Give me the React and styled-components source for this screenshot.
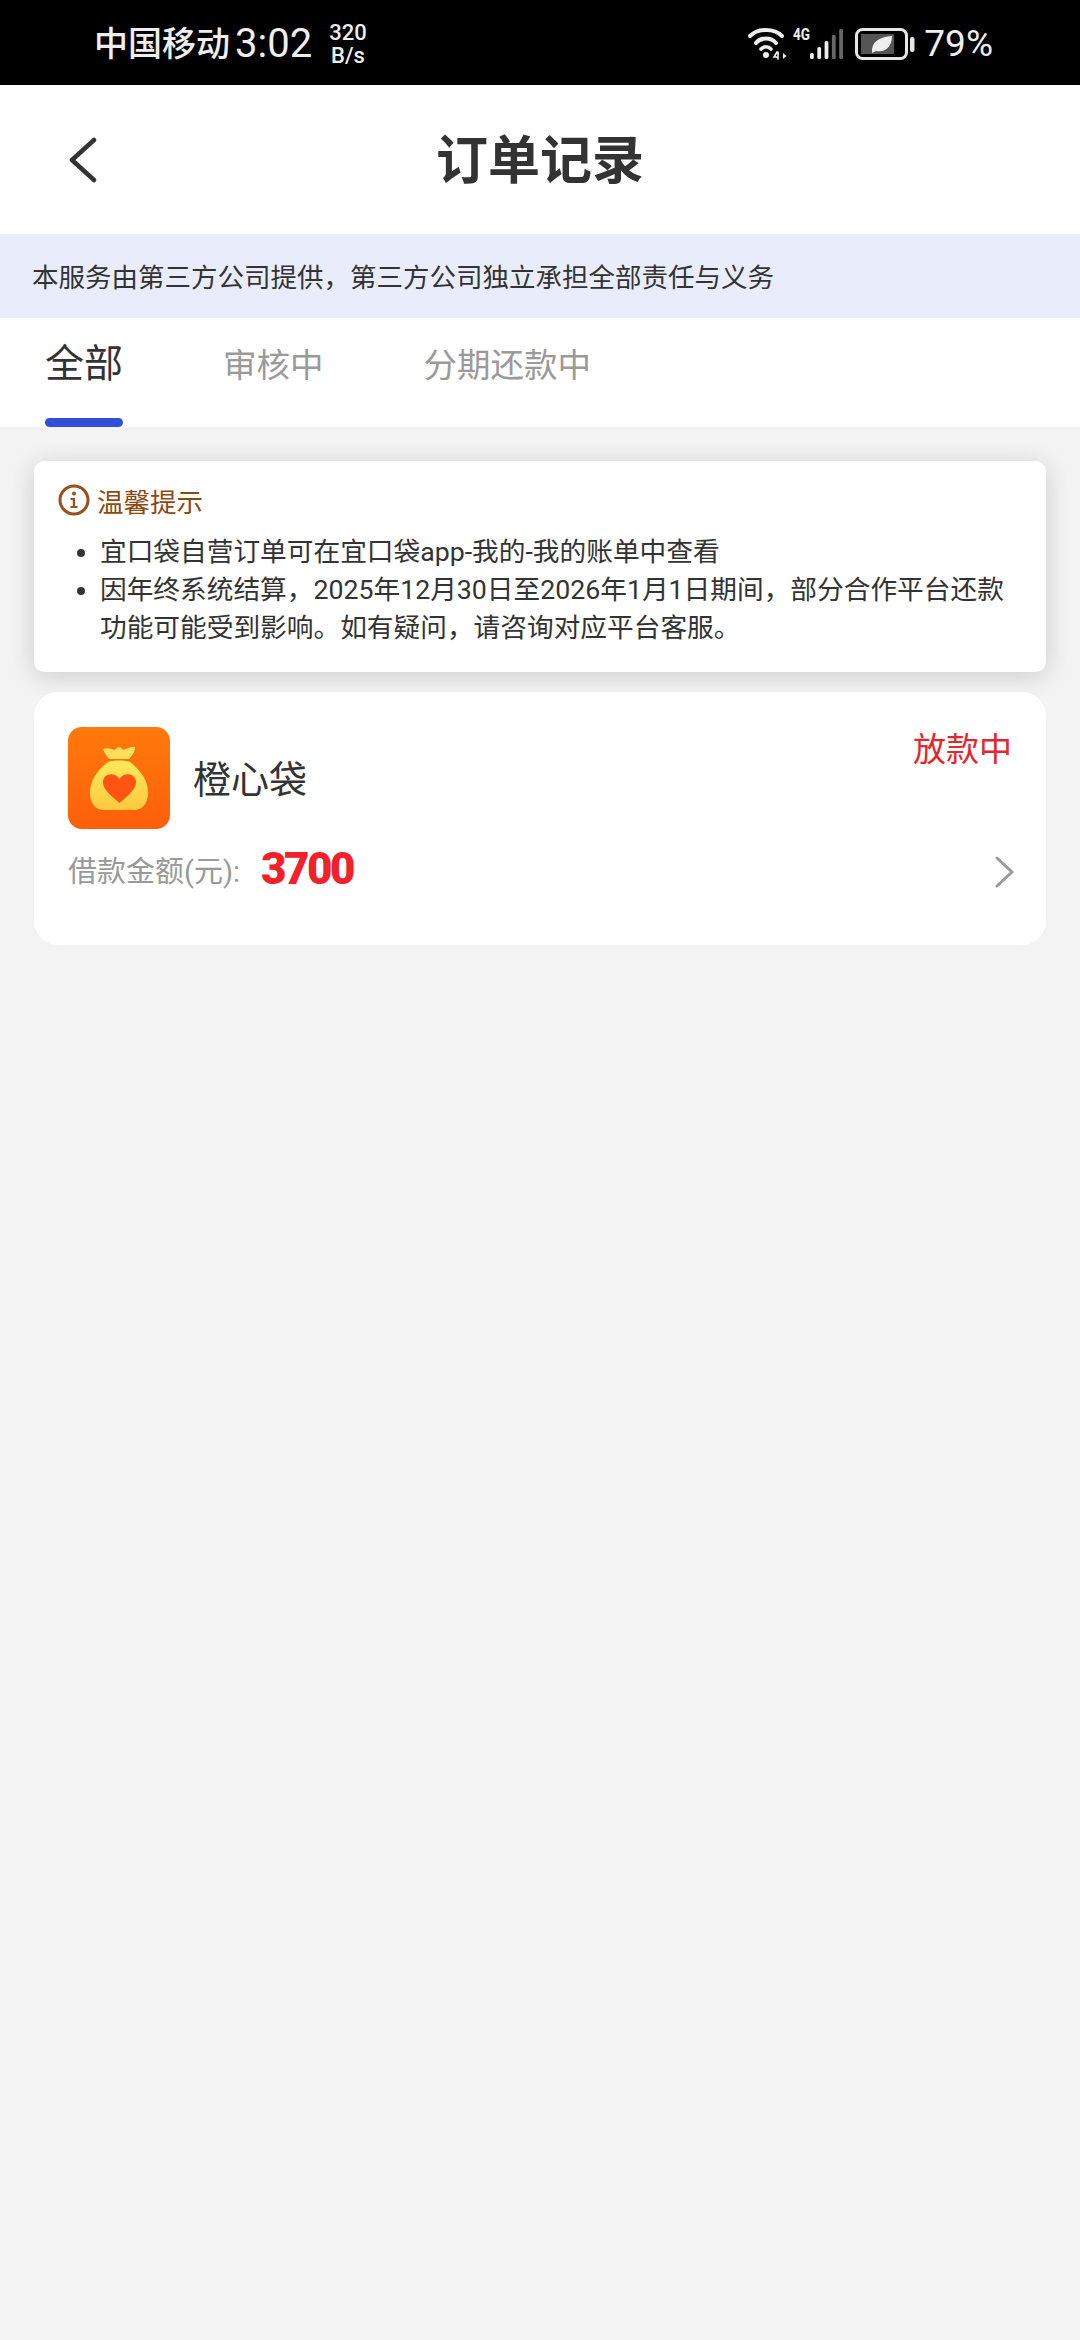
import styled, { createGlobalStyle } from 'styled-components';

const Global = createGlobalStyle`
  html, body { margin: 0; padding: 0; background: #f3f3f3; }
  * { box-sizing: border-box; }
  body { font-family: "Roboto", "Noto Sans CJK SC", sans-serif; }
`;

const Page = styled.div`
  width: 1080px;
  height: 2340px;
  overflow: hidden;
  background: #f3f3f3;
`;

const StatusBar = styled.div`
  height: 85px;
  background: #000;
  color: #eee;
  display: flex;
  align-items: center;
  justify-content: space-between;
  padding: 2px 87px 0 94px;
`;

const StatusGroup = styled.div`
  display: flex;
  align-items: center;
`;

const Carrier = styled.span`
  font-size: 34px;
  font-weight: 500;
  line-height: 40px;
`;

const Clock = styled.span`
  font-size: 40px;
  line-height: 40px;
  margin-left: 5px;
`;

const Speed = styled.span`
  font-size: 22px;
  font-weight: 500;
  line-height: 23px;
  margin-left: 17px;
  text-align: center;
`;

const NetType = styled.span`
  width: 17px;
  margin: -19px 0 0 5px;
  font-size: 17px;
  font-weight: 700;
  line-height: 18px;
  transform: scaleX(0.8);
  transform-origin: left center;
`;

const BatteryIconBox = styled.span`
  display: flex;
  margin-left: 10px;
`;

const Battery = styled.span`
  font-size: 37px;
  line-height: 40px;
  margin-left: 9px;
`;

const Header = styled.header`
  height: 149px;
  background: #fff;
  display: flex;
  align-items: center;
  justify-content: center;
  position: relative;
`;

const BackIcon = styled.svg`
  position: absolute;
  left: 68px;
  top: 52px;
`;

const Title = styled.h1`
  margin: 0 0 6px 0;
  font-size: 52px;
  font-weight: 700;
  color: #333;
`;

const Notice = styled.div`
  height: 84px;
  background: #e9edfb;
  color: #333;
  font-size: 26.5px;
  display: flex;
  align-items: center;
  padding: 0 0 2px 32px;
`;

const Tabs = styled.nav`
  height: 109px;
  background: #fff;
  display: flex;
  padding-left: 45px;
  gap: 100px;
`;

const Tab = styled.div`
  position: relative;
  padding-top: ${(p) => (p.$active ? 23 : 25)}px;
  font-size: ${(p) => (p.$active ? 39 : 33.5)}px;
  line-height: 46px;
  color: ${(p) => (p.$active ? '#333' : '#9a9a9a')};

  &::after {
    content: ${(p) => (p.$active ? '""' : 'none')};
    position: absolute;
    left: 0;
    right: 0;
    bottom: 0;
    height: 9px;
    border-radius: 5px;
    background: #3050d8;
  }
`;

const Content = styled.main`
  padding: 34px 34px 0;
  display: flex;
  flex-direction: column;
  gap: 20px;
`;

const TipCard = styled.section`
  height: 211px;
  background: #fff;
  border-radius: 10px;
  box-shadow: 0 4px 26px rgba(0, 0, 0, 0.16);
  padding: 21px 24px 0;
`;

const TipHead = styled.div`
  display: flex;
  align-items: center;
  gap: 7px;
  height: 36px;
  color: #8a4a14;
  font-size: 26.5px;
`;

const TipList = styled.ul`
  margin: 15px 0 0;
  padding: 0 0 0 42px;
  color: #333;
  font-size: 26.7px;
  line-height: 38px;
  width: 952px;
`;

const OrderCard = styled.section`
  position: relative;
  height: 253px;
  background: #fff;
  border-radius: 24px;
  padding: 35px 34px 0;
`;

const Status = styled.span`
  position: absolute;
  right: 34px;
  top: 35px;
  font-size: 33px;
  line-height: 46px;
  color: #e0282e;
`;

const Brand = styled.div`
  display: flex;
  align-items: center;
  gap: 23px;
`;

const BrandName = styled.span`
  font-size: 38px;
  color: #333;
  margin-bottom: 3px;
`;

const Amount = styled.div`
  display: flex;
  align-items: center;
  margin-top: 12px;
  height: 56px;
`;

const AmountLabel = styled.span`
  font-size: 29px;
  color: #999;
`;

const AmountValue = styled.span`
  margin-left: 21px;
  font-size: 44px;
  font-weight: 900;
  letter-spacing: -2.5px;
  color: #f0212b;
`;

const Chevron = styled.svg`
  position: absolute;
  right: 30px;
  top: 164px;
`;

function WifiIcon() {
  return (
    <svg width="40" height="34" viewBox="0 0 40 34" fill="none" stroke="#eee" strokeLinecap="round">
      <path d="M2 9 C10 1 26 1 34 9" strokeWidth="4" />
      <path d="M8 16 C13 10 23 10 28 16" strokeWidth="4" />
      <path d="M13 22 C16 19 20 19 23 22" strokeWidth="3.6" />
      <circle cx="18" cy="28" r="3" fill="#eee" stroke="none" />
      <path d="M29 25 L26 30 H30 M30 25 V32" strokeWidth="1.6" />
      <path d="M35 26 L38.5 29 L35 32 Z" fill="#eee" stroke="none" />
    </svg>
  );
}

function SignalIcon() {
  const bars = [
    { x: 0, h: 6, fill: '#eee' },
    { x: 7.3, h: 12, fill: '#eee' },
    { x: 14.6, h: 18, fill: '#eee' },
    { x: 21.9, h: 24, fill: '#666' },
    { x: 29.2, h: 30, fill: '#666' },
  ];
  return (
    <svg width="35" height="34" viewBox="0 0 35 34">
      {bars.map((b) => (
        <rect key={b.x} x={b.x} y={32 - b.h} width="3.8" height={b.h} rx="1.5" fill={b.fill} />
      ))}
    </svg>
  );
}

function BatteryIcon() {
  return (
    <svg width="60" height="32" viewBox="0 0 60 32">
      <rect x="1.5" y="1.5" width="50" height="29" rx="6" fill="none" stroke="#e6e6e6" strokeWidth="3" />
      <rect x="6" y="6" width="33" height="20" fill="#555" />
      <path d="M17 25 C16 14 24 9 37 8 C37 18 31 25 21 23 L17 25 Z" fill="#eee" />
      <rect x="55" y="9" width="4.5" height="15" rx="2" fill="#e6e6e6" />
    </svg>
  );
}

function InfoIcon() {
  return (
    <svg width="32" height="32" viewBox="0 0 32 32">
      <circle cx="16" cy="16" r="14" fill="none" stroke="#99501c" strokeWidth="3" />
      <circle cx="16" cy="9.5" r="2" fill="#99501c" />
      <path d="M12.5 14 H17 V22 H19.5 V24 H12.5 V22 H14.8 V16 H12.5 Z" fill="#99501c" />
    </svg>
  );
}

function BrandLogo() {
  return (
    <svg width="102" height="102" viewBox="0 0 102 102">
      <defs>
        <linearGradient id="bg" x1="0" y1="0" x2="0" y2="1">
          <stop offset="0" stopColor="#ff7a0c" />
          <stop offset="1" stopColor="#ff5f0a" />
        </linearGradient>
        <linearGradient id="bag" x1="0" y1="0" x2="0" y2="1">
          <stop offset="0" stopColor="#ffe95c" />
          <stop offset="1" stopColor="#ffc93e" />
        </linearGradient>
      </defs>
      <rect width="102" height="102" rx="14" fill="url(#bg)" />
      <path d="M35 22 C40 20 44 22 47 23 C49 19 53 19 55 23 C59 22 63 19 67 20 C67 25 64 29 61 32 H41 C39 29 36 26 35 22 Z" fill="#ffde5a" />
      <path d="M40 35 C44 33 58 33 62 35 C74 44 81 56 80 68 C79 77 74 83 66 83 H36 C28 83 23 77 22 68 C21 56 28 44 40 35 Z" fill="url(#bag)" />
      <path d="M51.5 76 C44 69 35 63 35 55 C35 47 46 44 51.5 52 C57 44 68 47 68 55 C68 63 59 69 51.5 76 Z" fill="#ff5412" />
    </svg>
  );
}

export default function App() {
  return (
    <Page>
      <Global />
      <StatusBar>
        <StatusGroup>
          <Carrier>中国移动</Carrier>
          <Clock>3:02</Clock>
          <Speed>320<br />B/s</Speed>
        </StatusGroup>
        <StatusGroup>
          <WifiIcon />
          <NetType>4G</NetType>
          <SignalIcon />
          <BatteryIconBox>
            <BatteryIcon />
          </BatteryIconBox>
          <Battery>79%</Battery>
        </StatusGroup>
      </StatusBar>

      <Header>
        <BackIcon width="30" height="46" viewBox="0 0 30 46" fill="none" stroke="#333" strokeWidth="4.5" strokeLinecap="round" strokeLinejoin="round">
          <path d="M26 3 L4 23 L26 43" />
        </BackIcon>
        <Title>订单记录</Title>
      </Header>

      <Notice>本服务由第三方公司提供，第三方公司独立承担全部责任与义务</Notice>

      <Tabs>
        <Tab $active>全部</Tab>
        <Tab>审核中</Tab>
        <Tab>分期还款中</Tab>
      </Tabs>

      <Content>
        <TipCard>
          <TipHead>
            <InfoIcon />
            温馨提示
          </TipHead>
          <TipList>
            <li>宜口袋自营订单可在宜口袋app-我的-我的账单中查看</li>
            <li>因年终系统结算，2025年12月30日至2026年1月1日期间，部分合作平台还款功能可能受到影响。如有疑问，请咨询对应平台客服。</li>
          </TipList>
        </TipCard>

        <OrderCard>
          <Status>放款中</Status>
          <Brand>
            <BrandLogo />
            <BrandName>橙心袋</BrandName>
          </Brand>
          <Amount>
            <AmountLabel>借款金额(元):</AmountLabel>
            <AmountValue>3700</AmountValue>
          </Amount>
          <Chevron width="22" height="32" viewBox="0 0 22 32" fill="none" stroke="#999" strokeWidth="3" strokeLinecap="round" strokeLinejoin="round">
            <path d="M3 2 L18 16 L3 30" />
          </Chevron>
        </OrderCard>
      </Content>
    </Page>
  );
}
